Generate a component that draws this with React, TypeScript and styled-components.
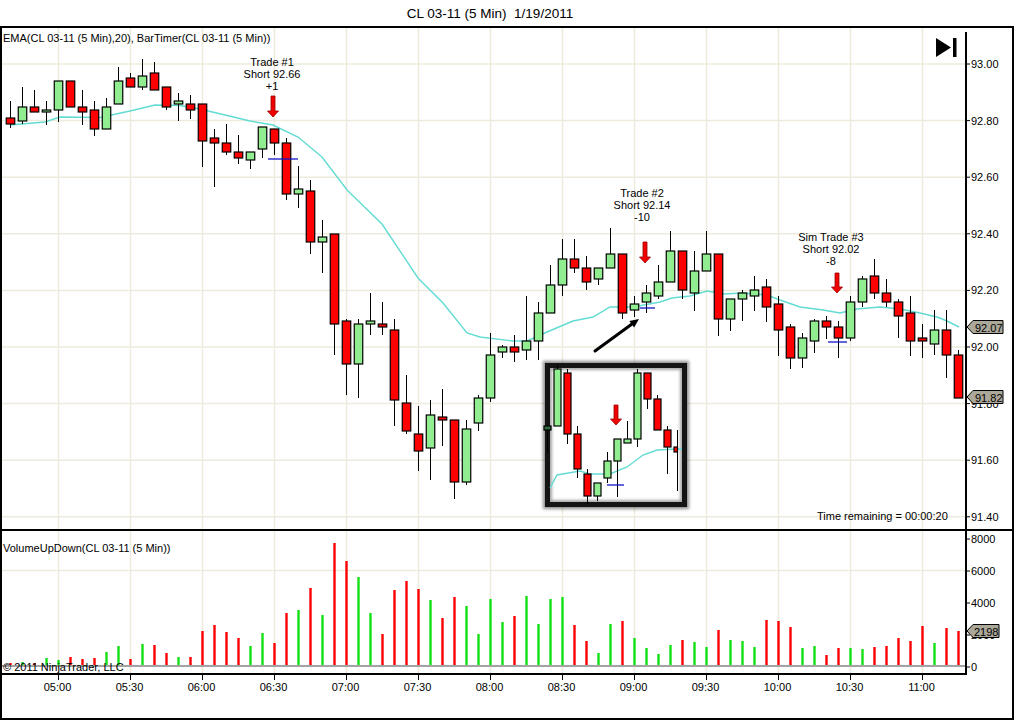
import React from 'react';
import styled, { createGlobalStyle } from 'styled-components';

const FONT = '"Liberation Sans", Arial, Helvetica, sans-serif';

// hi, bodyTop, bodyBottom, lo (pixel rows), up (1 = green)
type Bar = [number, number, number, number, number];

const BARS: Bar[] = [
  [101, 118, 124, 128, 0], [87, 107, 121, 124, 1], [90, 107, 112, 112, 0], [101, 110, 112, 125, 1],
  [81, 81, 110, 122, 1], [81, 81, 107, 107, 0], [90, 107, 112, 125, 0], [101, 110, 129, 136, 0],
  [98, 107, 129, 129, 1], [67, 81, 104, 104, 1], [73, 78, 87, 87, 0], [59, 76, 87, 90, 1],
  [62, 73, 90, 90, 0], [87, 87, 107, 110, 0], [93, 101, 104, 121, 1], [95, 104, 110, 119, 0],
  [104, 104, 141, 167, 0], [129, 138, 143, 187, 0], [124, 143, 152, 155, 0], [135, 152, 158, 164, 0],
  [152, 152, 160, 169, 1], [127, 127, 149, 158, 1], [129, 129, 143, 155, 0], [138, 143, 194, 200, 0],
  [166, 189, 194, 208, 1], [180, 191, 242, 254, 0], [220, 237, 242, 273, 1], [234, 234, 324, 355, 0],
  [319, 321, 364, 395, 0], [319, 324, 364, 398, 1], [293, 321, 324, 335, 1], [302, 324, 327, 335, 0],
  [319, 330, 400, 426, 0], [375, 403, 431, 434, 0], [406, 434, 451, 471, 0], [400, 415, 448, 480, 1],
  [389, 417, 420, 446, 0], [420, 420, 482, 499, 0], [420, 429, 482, 485, 1], [395, 398, 423, 431, 1],
  [333, 355, 398, 402, 1], [345, 347, 352, 358, 1], [335, 347, 352, 362, 0], [296, 341, 350, 360, 1],
  [302, 313, 341, 360, 1], [265, 285, 313, 313, 1], [239, 259, 285, 296, 1], [239, 259, 268, 273, 0],
  [256, 268, 282, 290, 0], [268, 268, 279, 285, 1], [228, 254, 268, 268, 1], [254, 254, 313, 319, 0],
  [296, 304, 310, 317, 1], [285, 293, 302, 313, 1], [265, 282, 296, 299, 1], [231, 251, 282, 282, 1],
  [251, 251, 290, 299, 0], [251, 271, 293, 311, 1], [231, 254, 271, 271, 1], [254, 254, 319, 336, 0],
  [299, 299, 319, 331, 1], [290, 293, 299, 321, 1], [276, 290, 296, 311, 1], [279, 287, 307, 322, 0],
  [296, 304, 330, 356, 0], [324, 327, 358, 369, 0], [333, 338, 358, 368, 1], [319, 321, 341, 353, 1],
  [316, 321, 327, 339, 0], [321, 327, 338, 358, 0], [296, 302, 338, 341, 1], [276, 279, 302, 307, 1],
  [259, 276, 293, 299, 0], [279, 293, 302, 307, 0], [299, 302, 316, 338, 0], [296, 313, 341, 356, 0],
  [324, 338, 341, 358, 0], [310, 330, 344, 355, 1], [310, 330, 355, 378, 0], [350, 355, 398, 398, 0],
];

const VOL_TOP: number[] = [
  663, 662, 663, 658, 660, 657, 659, 658, 652, 646, 659, 644, 645, 653, 657, 657,
  631, 625, 632, 638, 646, 633, 643, 613, 610, 588, 615, 543, 561, 577, 613, 634,
  590, 581, 589, 600, 618, 597, 606, 634, 599, 622, 616, 596, 624, 599, 597, 625,
  641, 653, 624, 621, 638, 648, 654, 645, 640, 642, 647, 630, 640, 641, 647, 620,
  621, 627, 648, 646, 655, 648, 648, 649, 647, 646, 638, 641, 626, 643, 628, 631,
];

const EMA_POINTS = [
  [10, 125], [45, 122], [60, 117], [100, 117.5], [130, 111], [155, 105], [180, 105.5], [200, 109],
  [225, 115], [250, 121], [273, 125], [298, 137], [322, 157], [347, 190], [382, 224], [418, 278],
  [443, 303], [467, 333], [480, 337], [513, 341], [527, 341], [547, 332], [573, 321], [593, 317],
  [610, 307], [633, 307], [660, 302], [672, 298], [690, 296], [707, 291], [723, 294], [743, 293],
  [767, 295], [780, 300], [800, 307], [823, 310], [840, 313], [857, 309], [880, 307], [900, 309],
  [920, 313], [937, 317], [947, 321], [959, 327],
];

// inset (zoomed picture): cx, hi, top, bottom, lo, kind (1 green, 0 red, 2 dark)
const INSET_BARS: number[][] = [
  [557.5, 365, 369, 426, 426, 1], [567.5, 369, 373, 434, 444, 0], [577.5, 426, 434, 469, 478, 0],
  [587.5, 469, 474, 496, 504, 0], [597.5, 483, 483, 496, 501, 1], [607.5, 452, 461, 478, 483, 1],
  [617.5, 439, 439, 461, 497, 1], [627.5, 421, 439, 443, 443, 1], [637.5, 369, 373, 439, 447, 1],
  [647.5, 373, 373, 399, 409, 0], [657.5, 395, 399, 430, 430, 0], [667.5, 426, 430, 447, 474, 0],
];
const INSET_EMA = '550,488 557,475 580,471 590,474 610,474 627,467 643,455 657,450 677,449 682,449';

const PRICE_LABELS = ['93.00', '92.80', '92.60', '92.40', '92.20', '92.00', '91.80', '91.60', '91.40'];
const priceY = (p: number) => 347 - (p - 92) * 283;
const VOL_LABELS: [string, number][] = [['8000', 539], ['6000', 571], ['4000', 603], ['2000', 635], ['0', 667]];
const TIMES = ['05:00', '05:30', '06:00', '06:30', '07:00', '07:30', '08:00', '08:30', '09:00', '09:30', '10:00', '10:30', '11:00'];
const gridX = (i: number) => 58.5 + 72 * i;
const barX = (i: number) => 10.5 + 12 * i;

const TRADES = [
  { x: 272, lines: ['Trade #1', 'Short 92.66', '+1'], top: 62, arrowX: 273, arrowTop: 96, tip: 117 },
  { x: 642, lines: ['Trade #2', 'Short 92.14', '-10'], top: 193, arrowX: 645, arrowTop: 242, tip: 263 },
  { x: 831, lines: ['Sim Trade #3', 'Short 92.02', '-8'], top: 237, arrowX: 837, arrowTop: 273, tip: 293 },
];
const FILLS = [
  [268, 298, 159],
  [640, 655, 308],
  [828, 847, 342],
];

const GlobalStyle = createGlobalStyle`
  html, body { margin: 0; padding: 0; background: #ffffff; }
  body { font-family: ${FONT}; color: #000000; }
`;

const Page = styled.div`
  width: 1016px;
  height: 720px;
  display: flex;
  flex-direction: column;
  background: #ffffff;
  overflow: hidden;
`;

const TitleBar = styled.div`
  box-sizing: border-box;
  flex: none;
  height: 26px;
  width: 980px;
  padding-top: 2px;
  line-height: 24px;
  text-align: center;
  font-size: 13.5px;
  white-space: pre;
`;

const Frame = styled.div`
  box-sizing: border-box;
  flex: none;
  width: 1014px;
  height: 694px;
  border: 2px solid #000000;
  display: flex;
  flex-direction: column;
`;

const Panel = styled.div<{ $h: number; $divider?: boolean }>`
  position: relative;
  flex: none;
  height: ${(p) => p.$h}px;
  border-bottom: ${(p) => (p.$divider ? '2px solid #000000' : 'none')};
`;

const ChartSvg = styled.svg`
  display: block;
  width: 1010px;
  height: 100%;
  overflow: visible;
  font-family: ${FONT};
`;

const Legend = styled.div<{ $top: number; $left: number }>`
  position: absolute;
  top: ${(p) => p.$top}px;
  left: ${(p) => p.$left}px;
  font-size: 11px;
  line-height: 13px;
  white-space: nowrap;
  pointer-events: none;
`;

const ZoomInset = styled.div`
  position: absolute;
  left: 543px;
  top: 335px;
  width: 142px;
  height: 144px;
  box-sizing: border-box;
  border: 5px solid #141414;
  background: #ffffff;
  box-shadow: 0 0 3px 2px rgba(0, 0, 0, 0.45), inset 0 0 3px 2px rgba(0, 0, 0, 0.35);
`;

const InsetSvg = styled.svg`
  position: absolute;
  left: -5px;
  top: -5px;
  width: 142px;
  height: 144px;
  overflow: visible;
`;

const GridLine = styled.line`
  stroke: #eeebdc;
  stroke-width: 1.5;
`;
const AxisLine = styled.line`
  stroke: #000000;
  stroke-width: 2;
`;
const Tick = styled.line`
  stroke: #000000;
  stroke-width: 1;
`;
const AxisLabel = styled.text<{ $anchor?: string }>`
  font-size: 11px;
  fill: #000000;
  dominant-baseline: central;
  text-anchor: ${(p) => p.$anchor || 'start'};
`;
const Wick = styled.line`
  stroke: #000000;
  stroke-width: 1;
`;
const Body = styled.rect<{ $kind: number }>`
  fill: ${(p) => (p.$kind === 1 ? '#90ee90' : p.$kind === 2 ? '#2f6f3f' : '#ff0000')};
  stroke: #000000;
  stroke-width: 1.2;
`;
const VolBar = styled.rect<{ $up: boolean }>`
  fill: ${(p) => (p.$up ? '#14e014' : '#ff0000')};
`;
const BaseLine = styled.line`
  stroke: #a3a3a3;
  stroke-width: 2;
`;
const EmaLine = styled.polyline`
  fill: none;
  stroke: #62dcd3;
  stroke-width: 1.4;
`;
const TradeText = styled.text`
  font-size: 11px;
  fill: #000000;
  text-anchor: middle;
  dominant-baseline: central;
`;
const RedArrow = styled.path`
  fill: #f00000;
  stroke: #9a0000;
  stroke-width: 0.8;
`;
const FillMark = styled.line`
  stroke: #1414c8;
  stroke-width: 1.3;
`;
const PointerLine = styled.line`
  stroke: #000000;
  stroke-width: 3;
  stroke-linecap: round;
`;
const PointerHead = styled.polygon`
  fill: #000000;
`;
const PriceMarker = styled.path`
  fill: #aca899;
  stroke: #000000;
  stroke-width: 1;
`;
const GoEndIcon = styled.g`
  fill: #000000;
`;

const arrowPath = (cx: number, top: number, tip: number) => {
  const neck = tip - 6;
  return `M${cx - 2},${top} H${cx + 2} V${neck} H${cx + 5.5} L${cx},${tip} L${cx - 5.5},${neck} H${cx - 2} Z`;
};

const markerPath = (y: number, right: number) =>
  `M967,${y} L973,${y - 6.5} H${right} V${y + 6.5} H973 Z`;

const Candle: React.FC<{ cx: number; hi: number; top: number; bot: number; lo: number; kind: number; w?: number }> = ({
  cx, hi, top, bot, lo, kind, w = 8.5,
}) => (
  <g>
    <Wick x1={cx} x2={cx} y1={hi} y2={lo} />
    <Body $kind={kind} x={cx - w / 2} y={top} width={w} height={Math.max(bot - top, 1.6)} />
  </g>
);

const PricePanel: React.FC = () => (
  <Panel $h={501} $divider>
    <ChartSvg viewBox="2 28 1010 501">
      {PRICE_LABELS.map((l) => (
        <GridLine key={l} x1={2} x2={966} y1={priceY(parseFloat(l))} y2={priceY(parseFloat(l))} />
      ))}
      {TIMES.map((t, i) => (
        <GridLine key={t} x1={gridX(i)} x2={gridX(i)} y1={28} y2={529} />
      ))}
      <EmaLine points={EMA_POINTS.map((p) => p.join(',')).join(' ')} />
      {BARS.map((b, i) => (
        <Candle key={i} cx={barX(i)} hi={b[0]} top={b[1]} bot={b[2]} lo={b[3]} kind={b[4]} />
      ))}
      {TRADES.map((t) => (
        <g key={t.lines[0]}>
          {t.lines.map((l, j) => (
            <TradeText key={l} x={t.x} y={t.top + j * 12}>
              {l}
            </TradeText>
          ))}
          <RedArrow d={arrowPath(t.arrowX, t.arrowTop, t.tip)} />
        </g>
      ))}
      {FILLS.map((f) => (
        <FillMark key={f[2]} x1={f[0]} x2={f[1]} y1={f[2]} y2={f[2]} />
      ))}
      <PointerLine x1={595} y1={351} x2={632} y2={324} />
      <PointerHead points="639,319 634.1,327.5 629.4,321.1" />
      <AxisLabel x={817} y={516}>
        Time remaining = 00:00:20
      </AxisLabel>
      <AxisLine x1={966} x2={966} y1={32} y2={529} />
      {PRICE_LABELS.map((l) => {
        const y = priceY(parseFloat(l));
        return (
          <g key={l}>
            <Tick x1={966} x2={970} y1={y} y2={y} />
            <AxisLabel x={971} y={y}>
              {l}
            </AxisLabel>
          </g>
        );
      })}
      <PriceMarker d={markerPath(327, 1003)} />
      <AxisLabel x={975} y={327.5}>92.07</AxisLabel>
      <PriceMarker d={markerPath(397, 1003)} />
      <AxisLabel x={975} y={397.5}>91.82</AxisLabel>
      <GoEndIcon>
        <polygon points="936,38 936,57 951,47.5" />
        <rect x={953} y={38} width={3.5} height={19} />
      </GoEndIcon>
    </ChartSvg>
    <Legend $top={4} $left={1}>
      EMA(CL 03-11 (5 Min),20), BarTimer(CL 03-11 (5 Min))
    </Legend>
    <ZoomInset>
      <InsetSvg viewBox="545 363 142 144">
        <EmaLine points={INSET_EMA} />
        <Wick x1={547.5} x2={547.5} y1={426} y2={453} />
        <Body $kind={2} x={544} y={426} width={7} height={4} />
        {INSET_BARS.map((b) => (
          <Candle key={b[0]} cx={b[0]} hi={b[1]} top={b[2]} bot={b[3]} lo={b[4]} kind={b[5]} w={7} />
        ))}
        <Wick x1={677.5} x2={677.5} y1={430} y2={491} />
        <Body $kind={0} x={674} y={447} width={3.5} height={5} />
        <FillMark x1={607} x2={624} y1={485} y2={485} />
        <RedArrow d={arrowPath(616, 405, 425)} />
      </InsetSvg>
    </ZoomInset>
  </Panel>
);

const VolumePanel: React.FC = () => (
  <Panel $h={144}>
    <ChartSvg viewBox="2 531 1010 144">
      <GridLine x1={2} x2={966} y1={570.5} y2={570.5} />
      {TIMES.map((t, i) => (
        <GridLine key={t} x1={gridX(i)} x2={gridX(i)} y1={531} y2={673} />
      ))}
      {VOL_TOP.map((top, i) => (
        <VolBar key={i} $up={BARS[i][4] === 1} x={barX(i) - 1.2} y={top} width={2.4} height={666 - top} />
      ))}
      <BaseLine x1={2} x2={966} y1={666} y2={666} />
      <AxisLine x1={2} x2={967} y1={674} y2={674} />
      <AxisLine x1={966} x2={966} y1={531} y2={675} />
      {VOL_LABELS.map(([l, y]) => (
        <g key={l}>
          <Tick x1={966} x2={970} y1={y} y2={y} />
          <AxisLabel x={971} y={y}>
            {l}
          </AxisLabel>
        </g>
      ))}
      <PriceMarker d={markerPath(631, 999)} />
      <AxisLabel x={974} y={631.5}>2198</AxisLabel>
    </ChartSvg>
    <Legend $top={11} $left={1}>
      VolumeUpDown(CL 03-11 (5 Min))
    </Legend>
    <Legend $top={130} $left={1}>
      © 2011 NinjaTrader, LLC
    </Legend>
  </Panel>
);

const TimeAxis: React.FC = () => (
  <Panel $h={43}>
    <ChartSvg viewBox="2 675 1010 43">
      {TIMES.map((t, i) => (
        <g key={t}>
          <Tick x1={gridX(i)} x2={gridX(i)} y1={675} y2={680} />
          <AxisLabel $anchor="middle" x={gridX(i) - 1} y={687}>
            {t}
          </AxisLabel>
        </g>
      ))}
    </ChartSvg>
  </Panel>
);

export default function App() {
  return (
    <>
      <GlobalStyle />
      <Page>
        <TitleBar>CL 03-11 (5 Min)  1/19/2011</TitleBar>
        <Frame>
          <PricePanel />
          <VolumePanel />
          <TimeAxis />
        </Frame>
      </Page>
    </>
  );
}
